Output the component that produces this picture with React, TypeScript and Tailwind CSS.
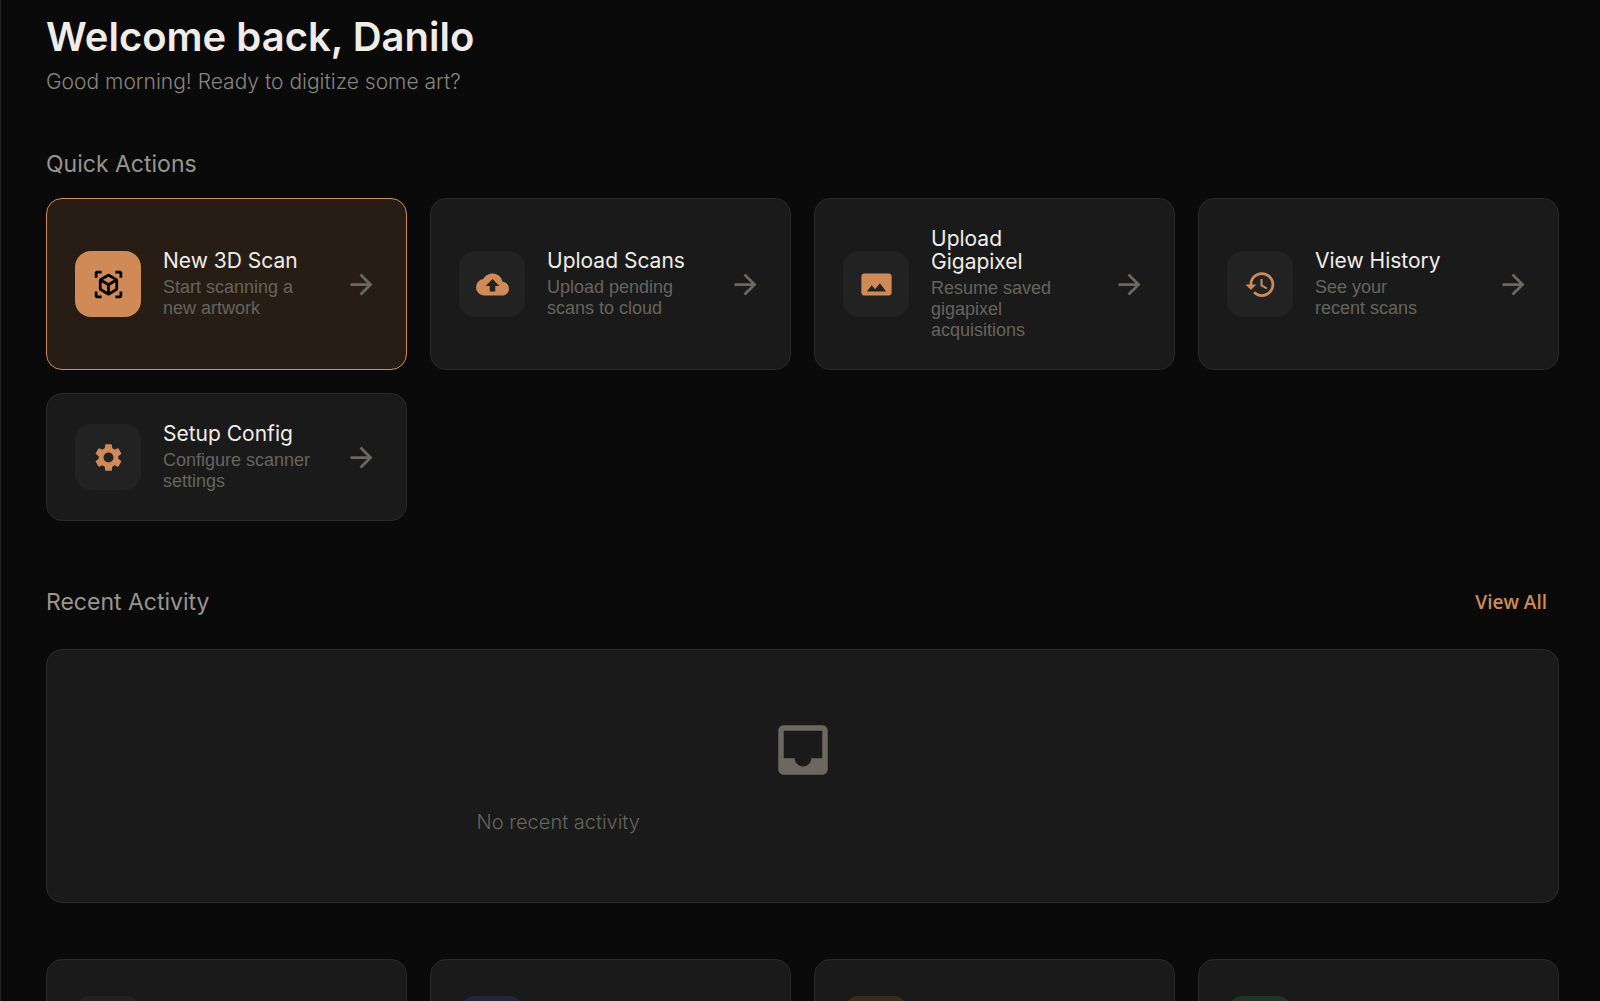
import React from 'react';
import type { IconType } from 'react-icons';
import { MdArrowForward, MdBackup, MdHistory, MdInbox, MdSettings } from 'react-icons/md';
import { clsx } from 'clsx';

type IconProps = { className?: string };

const CubeScanIcon: React.FC<IconProps> = ({ className }) => (
  <svg viewBox="0 0 24 24" fill="currentColor" className={className} aria-hidden="true">
    <path d="M17,22V20H20V17H22V20.5C22,20.89 21.84,21.24 21.54,21.54C21.24,21.84 20.89,22 20.5,22H17M7,22H3.5C3.11,22 2.76,21.84 2.46,21.54C2.16,21.24 2,20.89 2,20.5V17H4V20H7V22M17,2H20.5C20.89,2 21.24,2.16 21.54,2.46C21.84,2.76 22,3.11 22,3.5V7H20V4H17V2M7,2V4H4V7H2V3.5C2,3.11 2.16,2.76 2.46,2.46C2.76,2.16 3.11,2 3.5,2H7M13,17.25L17,14.95V10.36L13,12.66V17.25M12,10.92L16,8.63L12,6.28L8,8.63L12,10.92M7,14.95L11,17.25V12.66L7,10.36V14.95M18.23,7.59C18.73,7.91 19,8.34 19,8.91V15.23C19,15.8 18.73,16.23 18.23,16.55L12.75,19.73C12.25,20.05 11.75,20.05 11.25,19.73L5.77,16.55C5.27,16.23 5,15.8 5,15.23V8.91C5,8.34 5.27,7.91 5.77,7.59L11.25,4.41C11.5,4.28 11.75,4.22 12,4.22C12.25,4.22 12.5,4.28 12.75,4.41L18.23,7.59Z" />
  </svg>
);

const PanoramaIcon: React.FC<IconProps> = ({ className }) => (
  <svg viewBox="0 0 24 24" fill="currentColor" className={className} aria-hidden="true">
    <path d="M23 18V6c0-1.1-.9-2-2-2H3c-1.1 0-2 .9-2 2v12c0 1.1.9 2 2 2h18c1.1 0 2-.9 2-2zM8.5 12.5l2.5 3.01L14.500 11l4.500 6H5l3.500-4.500z" />
  </svg>
);

interface QuickAction {
  title: string;
  description: string;
  icon: IconType | React.FC<IconProps>;
  primary?: boolean;
}

const quickActions: QuickAction[] = [
  { title: 'New 3D Scan', description: 'Start scanning a new artwork', icon: CubeScanIcon, primary: true },
  { title: 'Upload Scans', description: 'Upload pending scans to cloud', icon: MdBackup },
  { title: 'Upload Gigapixel', description: 'Resume saved gigapixel acquisitions', icon: PanoramaIcon },
  { title: 'View History', description: 'See your recent\u00a0scans', icon: MdHistory },
  { title: 'Setup Config', description: 'Configure scanner settings', icon: MdSettings },
];

const statColors = ['bg-[#222222]', 'bg-[#21263a]', 'bg-[#3a2c1d]', 'bg-[#223328]'];

const ActionCard: React.FC<{ action: QuickAction }> = ({ action }) => {
  const Icon = action.icon;
  return (
    <button
      type="button"
      className={clsx(
        'flex items-center rounded-2xl border p-7 text-left cursor-pointer',
        action.primary ? 'border-[#d38b59] bg-[#271d15]' : 'border-[#2a2a2a] bg-[#1a1a1a]'
      )}
    >
      <span
        className={clsx(
          'flex size-[66px] shrink-0 items-center justify-center rounded-2xl',
          action.primary ? 'bg-[#d08a58] text-black' : 'bg-[#222222] text-[#d08a58]'
        )}
      >
        <Icon className="size-[33px]" />
      </span>
      <span className="ml-[22px] min-w-0 flex-1">
        <span className="block text-[21px] leading-[23px] text-[#f0ede8]">{action.title}</span>
        <span className="mt-[5px] block font-['Liberation_Sans'] text-[18px] leading-[21px] text-[#66645f]">
          {action.description}
        </span>
      </span>
      <MdArrowForward className="ml-4 size-[33px] shrink-0 text-[#6b6862]" />
    </button>
  );
};

const App: React.FC = () => {
  return (
    <div className="h-screen overflow-hidden border-l border-[#242424] bg-[#0a0a0a] font-[Inter,sans-serif]">
      <main className="pt-[14px] pr-[41px] pl-[45px]">
        <header>
          <h1 className="text-[40px] leading-[46px] font-semibold text-[#f0ede8]">Welcome back, Danilo</h1>
          <p className="mt-[10px] text-[21px] leading-6 font-light text-[#88857f]">
            Good morning! Ready to digitize some art?
          </p>
        </header>

        <section className="mt-14">
          <h2 className="text-[23px] leading-7 text-[#98958f]">Quick Actions</h2>
          <div className="mt-5 grid grid-cols-4 gap-x-[23px] gap-y-[23px]">
            {quickActions.map((action) => (
              <ActionCard key={action.title} action={action} />
            ))}
          </div>
        </section>

        <section className="mt-[61px]">
          <div className="flex items-center justify-between">
            <h2 className="text-[23px] leading-10 text-[#98958f]">Recent Activity</h2>
            <a href="#activity" className="mr-3 font-['Open_Sans'] text-[19px] leading-10 font-semibold text-[#d08a58]">
              View All
            </a>
          </div>
          <div className="mt-[27px] flex flex-col items-center rounded-2xl border border-[#2a2a2a] bg-[#1a1a1a] pt-[67px] pb-[68px]">
            <MdInbox className="size-[66px] text-[#6b6860]" />
            <p className="mt-[27px] w-[652px] text-[20px] leading-6 font-light text-[#66645f]">No recent activity</p>
          </div>
        </section>

        <section className="mt-14 grid grid-cols-4 gap-[23px]">
          {statColors.map((color) => (
            <div key={color} className="rounded-2xl border border-[#2a2a2a] bg-[#1a1a1a] px-7 py-9">
              <div className={clsx('size-[66px] rounded-2xl', color)} />
            </div>
          ))}
        </section>
      </main>
    </div>
  );
};

export default App;
